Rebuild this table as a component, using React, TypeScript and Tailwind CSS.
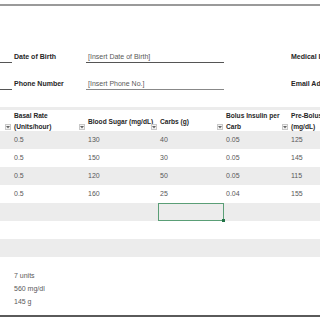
const cols = "grid grid-cols-[12px_74px_72px_66px_65px_1fr]";

const rows = [
  ["0.5", "130", "40", "0.05", "125"],
  ["0.5", "150", "30", "0.05", "145"],
  ["0.5", "120", "50", "0.05", "115"],
  ["0.5", "160", "25", "0.04", "155"],
  ["", "", "", "", ""],
  ["", "", "", "", ""],
  ["", "", "", "", ""],
];

function FilterButton() {
  return (
    <span className="absolute right-[1px] bottom-[3px] w-[6px] h-[6px] border border-[#c8c8c8] bg-[#f4f4f4] flex items-center justify-center">
      <svg width="4" height="3" viewBox="0 0 4 3">
        <path d="M0 0 L4 0 L2 2.5 Z" fill="#666" />
      </svg>
    </span>
  );
}

function HeaderCell({ lines }: { lines: string[] }) {
  return (
    <div className="relative h-full pl-[2px] pr-[8px] pb-[1px] flex flex-col justify-center font-bold text-[#262626] text-[6.6px] leading-[11px]">
      {lines.map((l) => (
        <span key={l} className="whitespace-nowrap">{l}</span>
      ))}
      <FilterButton />
    </div>
  );
}

export default function App() {
  return (
    <div
      className="w-[320px] h-[320px] bg-white overflow-hidden text-[7px] text-[#595959]"
      style={{ fontFamily: '"Liberation Sans", Arial, sans-serif' }}
    >
      <div className="h-[4px]" />
      <div className="h-[2px] bg-[#9a9a9a]" />
      <div className="h-[45px]" />

      {/* Date of Birth */}
      <div className="grid grid-cols-[12px_74px_138px_66px_1fr] h-[11px] leading-[11px]">
        <div className="border-b border-[#555]" />
        <div className="pl-[2px] font-bold text-[#262626] whitespace-nowrap">Date of Birth</div>
        <div className="pl-[2px] border-b border-[#555] whitespace-nowrap">[Insert Date of Birth]</div>
        <div />
        <div className="pl-[1px] font-bold text-[#262626] whitespace-nowrap">Medical ID</div>
      </div>
      <div className="h-[16px]" />

      {/* Phone Number */}
      <div className="grid grid-cols-[12px_74px_138px_66px_1fr] h-[11px] leading-[11px]">
        <div className="border-b border-[#555]" />
        <div className="pl-[2px] font-bold text-[#262626] whitespace-nowrap">Phone Number</div>
        <div className="pl-[2px] border-b border-[#888] whitespace-nowrap">[Insert Phone No.]</div>
        <div />
        <div className="pl-[1px] font-bold text-[#262626] whitespace-nowrap">Email Address</div>
      </div>
      <div className="h-[18px]" />
      <div className="h-[3px] bg-[#ececec]" />

      {/* Table header */}
      <div className={`${cols} h-[21px] bg-white`}>
        <div className="relative"><FilterButton /></div>
        <HeaderCell lines={["Basal Rate", "(Units/hour)"]} />
        <HeaderCell lines={["Blood Sugar (mg/dL)"]} />
        <HeaderCell lines={["Carbs (g)"]} />
        <HeaderCell lines={["Bolus Insulin per", "Carb"]} />
        <div className="h-full pl-[2px] pb-[1px] flex flex-col justify-center font-bold text-[#262626] text-[6.6px] leading-[11px]">
          <span className="whitespace-nowrap">Pre-Bolus</span>
          <span className="whitespace-nowrap">(mg/dL)</span>
        </div>
      </div>

      {/* Table rows */}
      {rows.map((r, i) => (
        <div
          key={i}
          className={`${cols} h-[18px] leading-[18px] ${i % 2 === 0 ? "bg-[#ececec]" : "bg-white"}`}
        >
          <div />
          {r.map((v, j) => (
            <div key={j} className="relative pl-[2px]">
              {v}
              {i === 4 && j === 2 && (
                <span className="absolute inset-0 border border-[#5a9e76]">
                  <span className="absolute -right-[2px] -bottom-[2px] w-[3px] h-[3px] bg-[#217346]" />
                </span>
              )}
            </div>
          ))}
        </div>
      ))}

      {/* Summary */}
      <div className="pt-[12px] pl-[14px] leading-[13px]">
        <div>7 units</div>
        <div>560 mg/dl</div>
        <div>145 g</div>
      </div>
      <div className="h-[7px]" />
      <div className="h-[2px] bg-[#5a5a5a]" />
    </div>
  );
}
